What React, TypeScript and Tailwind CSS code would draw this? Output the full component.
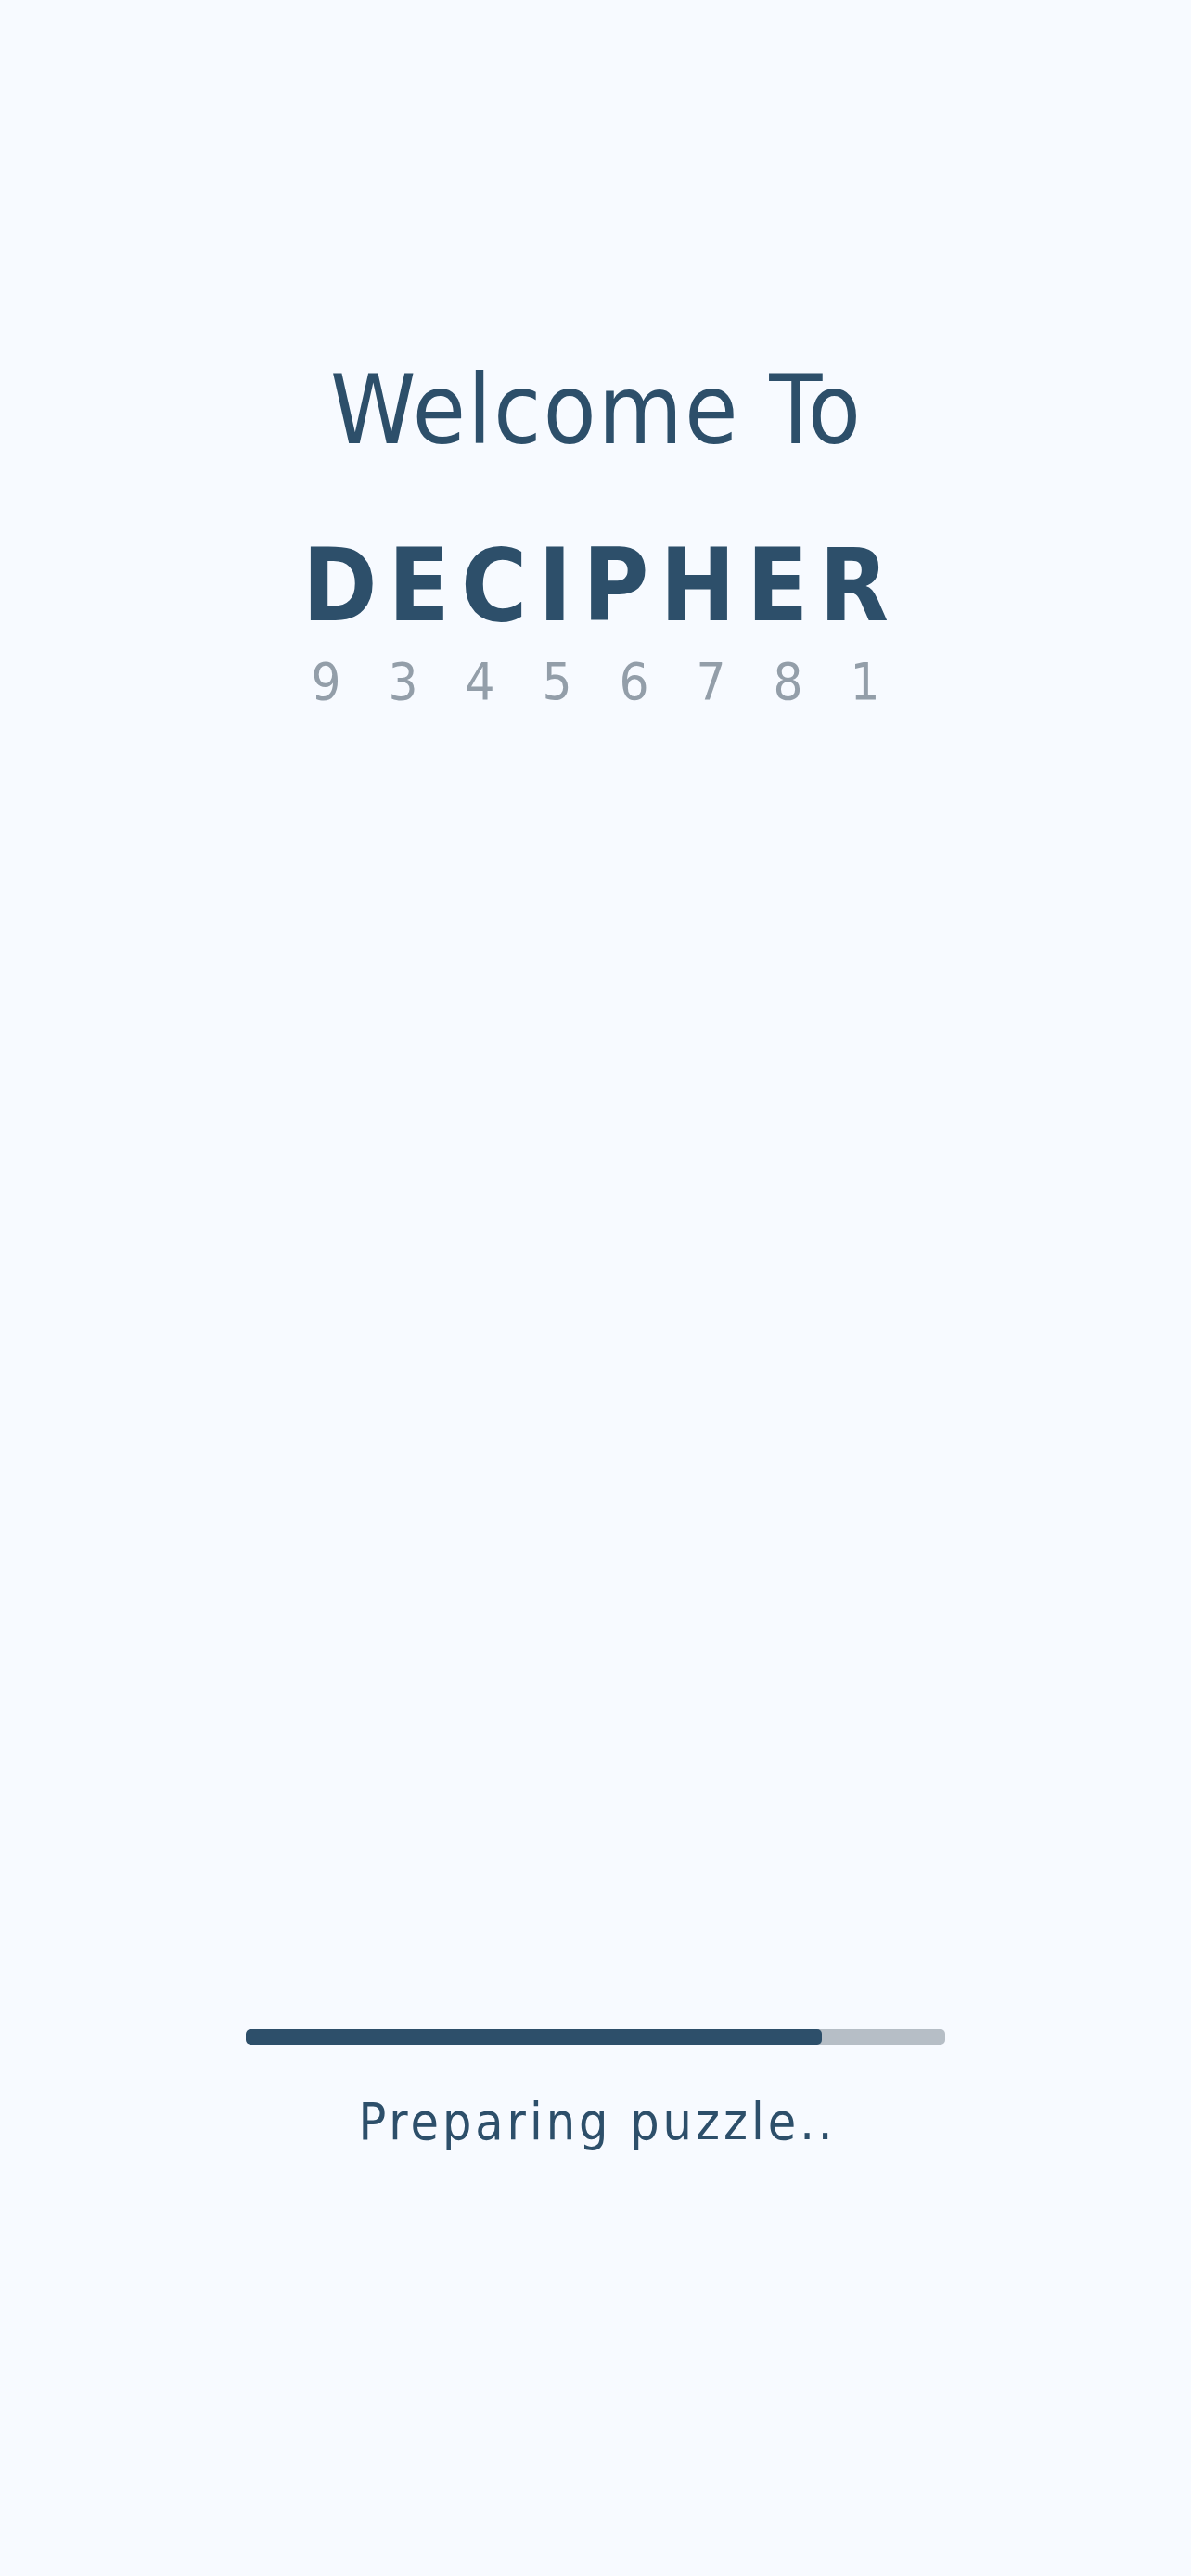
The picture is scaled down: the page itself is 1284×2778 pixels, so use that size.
const FONT = "font-['Liberation_Sans_Narrow','DejaVu_Sans_Condensed',Roboto,sans-serif]";

const DIGITS = ["9", "3", "4", "5", "6", "7", "8", "1"];

function ProgressBar({ value }: { value: number }) {
  return (
    <div className="h-[17px] w-[754px] overflow-hidden rounded-[5px] bg-[#b6bec6]">
      <div className="h-full rounded-[5px] bg-[#2d4f6a]" style={{ width: `${value}%` }} />
    </div>
  );
}

export default function App() {
  return (
    <div className={`flex min-h-[2778px] w-full flex-col items-center bg-[#f7faff] text-[#2d4f6a] ${FONT}`}>
      <h1 className="mt-[390px] pl-[2px] text-[104px] leading-none tracking-[2px]">Welcome To</h1>

      <div className="mt-[84px] flex flex-col items-center">
        <div className="pl-[12px] text-[108px] font-bold leading-none tracking-[12px]">DECIPHER</div>
        <div className="mt-[21px] grid grid-cols-8 text-[56px] leading-none text-[#939ea9]">
          {DIGITS.map((d, i) => (
            <span key={i} className="w-[83px] text-center">
              {d}
            </span>
          ))}
        </div>
      </div>

      <div className="mt-[1425px] flex flex-col items-center">
        <ProgressBar value={82.4} />
        <p className="mt-[56px] pl-[4px] text-[55px] leading-none tracking-[4px]">Preparing puzzle..</p>
      </div>
    </div>
  );
}
